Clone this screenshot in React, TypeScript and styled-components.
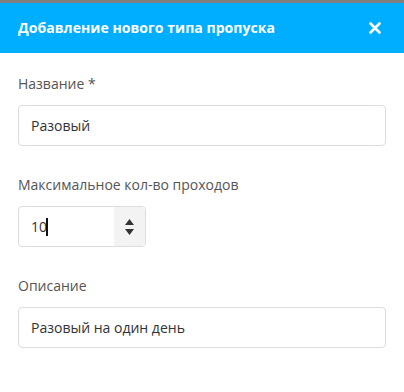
import { createGlobalStyle } from 'styled-components';
import styled from 'styled-components';

const GlobalStyle = createGlobalStyle`
  html, body {
    margin: 0;
    padding: 0;
    background: #ffffff;
  }
  body {
    font-family: 'Open Sans', 'Liberation Sans', sans-serif;
    font-size: 14px;
    color: #333;
  }
`;

const Modal = styled.div`
  width: 404px;
  height: 392px;
  background: #fff;
  border-top: 3px solid #808080;
  box-sizing: border-box;
`;

const Header = styled.div`
  height: 50px;
  background: #00aeff;
  display: flex;
  align-items: center;
  justify-content: space-between;
  padding: 0 17px 0 18px;
`;

const Title = styled.h4`
  margin: 0;
  color: #fff;
  font-size: 14px;
  font-weight: 700;
  line-height: 20px;
  letter-spacing: 0.05px;
`;

const CloseButton = styled.button`
  border: 0;
  background: transparent;
  padding: 0;
  width: 24px;
  height: 24px;
  display: flex;
  align-items: center;
  justify-content: center;
  cursor: pointer;
`;

const Body = styled.div`
  padding: 21px 18px;
  display: flex;
  flex-direction: column;
  gap: 29px;
`;

const Group = styled.div`
  display: flex;
  flex-direction: column;
  gap: 11px;
`;

const Label = styled.label`
  color: #555;
  font-size: 14px;
  line-height: 20px;
`;

const Field = styled.div<{ $width?: number }>`
  width: ${(p) => (p.$width ? `${p.$width}px` : '100%')};
  height: 41px;
  box-sizing: border-box;
  border: 1px solid #dcdce2;
  border-radius: 4px;
  display: flex;
  align-items: stretch;
  overflow: hidden;
`;

const Value = styled.div`
  flex: 1;
  display: flex;
  align-items: center;
  padding: 0 12px;
  color: #333;
  font-size: 14px;
`;

const Caret = styled.span`
  display: inline-block;
  width: 2px;
  height: 18px;
  margin-left: -1px;
  background: #111;
`;

const Spinner = styled.div`
  width: 31px;
  background: #f3f3f3;
  display: flex;
  flex-direction: column;
  align-items: center;
  justify-content: center;
  gap: 4px;
`;

const Arrow = ({ up }: { up?: boolean }) => (
  <svg width="9" height="6" viewBox="0 0 9 6">
    <path d={up ? 'M0 6 L4.5 0 L9 6 Z' : 'M0 0 L9 0 L4.5 6 Z'} fill="#333" />
  </svg>
);

export default function App() {
  return (
    <>
      <GlobalStyle />
      <Modal>
        <Header>
          <Title>Добавление нового типа пропуска</Title>
          <CloseButton aria-label="Закрыть">
            <svg width="12" height="12" viewBox="0 0 12 12">
              <path d="M1.5 1.5 L10.5 10.5 M10.5 1.5 L1.5 10.5" stroke="#fff" strokeWidth="2.6" strokeLinecap="round" />
            </svg>
          </CloseButton>
        </Header>
        <Body>
          <Group>
            <Label>Название *</Label>
            <Field>
              <Value>Разовый</Value>
            </Field>
          </Group>
          <Group>
            <Label>Максимальное кол-во проходов</Label>
            <Field $width={128}>
              <Value>
                10
                <Caret />
              </Value>
              <Spinner>
                <Arrow up />
                <Arrow />
              </Spinner>
            </Field>
          </Group>
          <Group>
            <Label>Описание</Label>
            <Field>
              <Value>Разовый на один день</Value>
            </Field>
          </Group>
        </Body>
      </Modal>
    </>
  );
}
